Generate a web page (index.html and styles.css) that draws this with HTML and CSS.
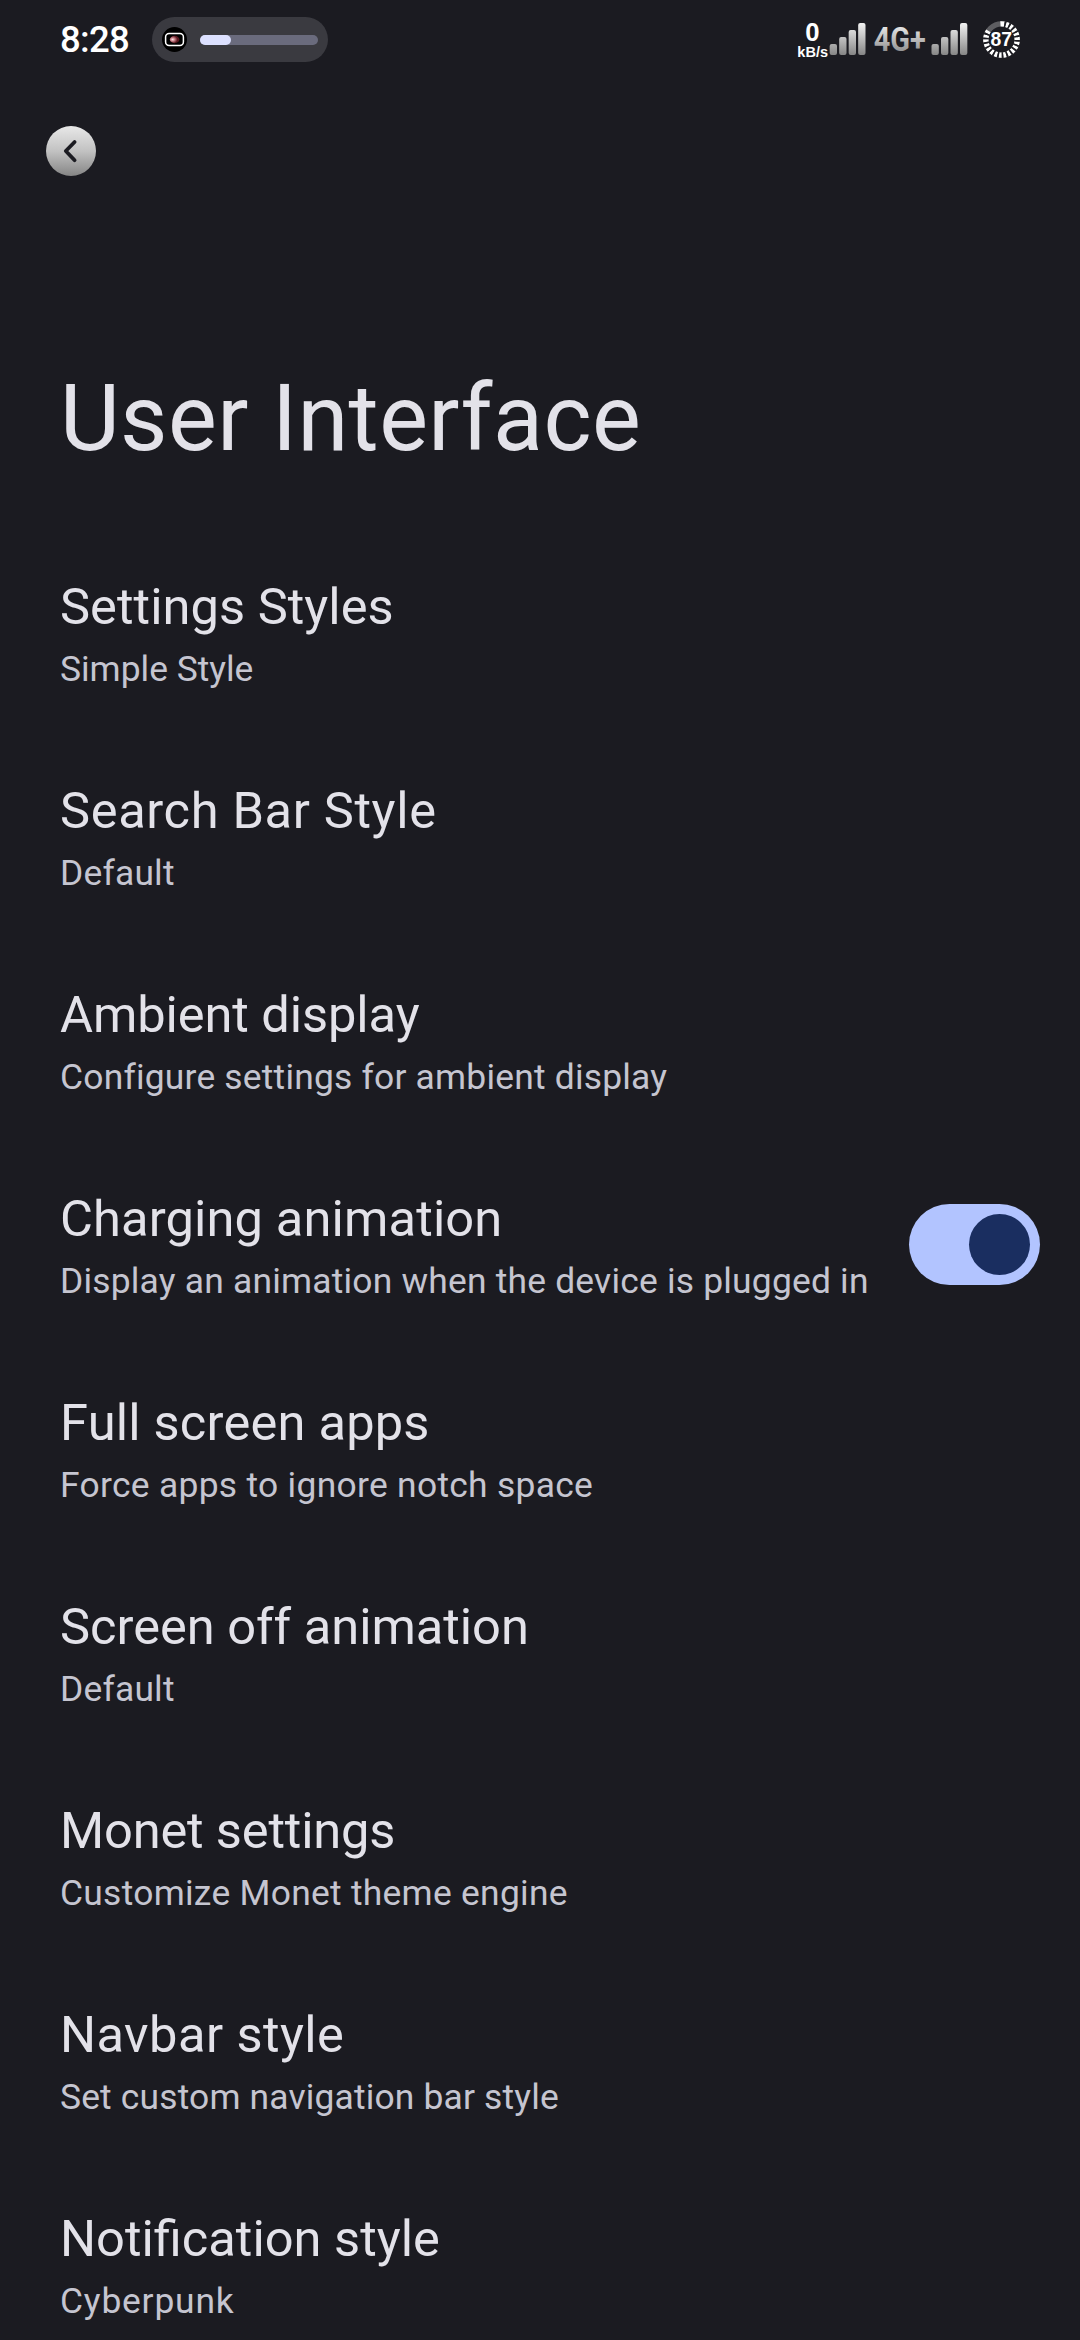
FILE: index.html
```html
<!DOCTYPE html>
<html lang="en">
<head>
<meta charset="utf-8">
<title>User Interface</title>
<link rel="stylesheet" href="styles.css">
</head>
<body>
<div class="screen">
  <header class="status">
    <span class="clock">8:28</span>
    <div class="chip">
      <svg class="chip-icon" viewBox="0 0 25 25">
        <defs><radialGradient id="lens" cx=".3"><stop offset="0" stop-color="#ffe9e9"/><stop offset=".45" stop-color="#c98088"/><stop offset="1" stop-color="#5a1820"/></radialGradient></defs>
        <circle cx="12.5" cy="12.5" r="12.5" fill="#000"/>
        <rect x="3.6" y="6.4" width="17.8" height="12.2" rx="3.5" fill="#000" stroke="#fff" stroke-width="1.5"/>
        <ellipse cx="12.6" cy="12.5" rx="4.8" ry="3.7" fill="url(#lens)"/>
      </svg>
      <div class="track"><div class="fill"></div></div>
    </div>
    <svg class="indicators" viewBox="0 0 780 240">
      <defs>
        <linearGradient id="silver" gradientUnits="userSpaceOnUse" x1="0" y1="69" x2="0" y2="166"><stop offset="0" stop-color="#f2f2f2"/><stop offset="1" stop-color="#858585"/></linearGradient>
        <g id="bars"><rect y="132" width="22" height="33" rx="6"/><rect x="28.5" y="111" width="22" height="54" rx="6"/><rect x="57" y="90" width="22" height="75" rx="6"/><rect x="85.500" y="69" width="22" height="96" rx="6"/></g>
      </defs>
      <text class="ind-text" x="97" y="123" font-size="77" text-anchor="middle">0</text>
      <text class="ind-text" x="52" y="171" font-size="44" textLength="92" lengthAdjust="spacingAndGlyphs">kB/s</text>
      <use href="#bars" x="149" fill="url(#silver)"/>
      <text class="ind-net" x="281" y="152" font-size="98" textLength="156" lengthAdjust="spacingAndGlyphs" fill="url(#silver)">4G+</text>
      <use href="#bars" x="454.500" fill="url(#silver)"/>
      <g fill="none" stroke-width="16">
        <circle cx="664.500" cy="118.500" r="47" stroke="#5e5e62"/>
        <circle cx="664.500" cy="118.500" r="47" stroke="#fff" pathLength="100" stroke-dasharray="2.9 1.6 2.9 1.6 2.9 1.6 2.9 1.6 2.9 1.6 2.9 1.6 2.9 1.6 2.9 1.6 2.9 1.6 2.9 1.6 2.9 1.6 2.9 1.6 2.9 1.6 2.9 1.6 2.9 1.6 2.9 1.6 2.9 1.6 2.9 1.6 2.9 14.500 0 0" transform="rotate(-90 664.500 118.500)"/>
        <circle cx="664.500" cy="118.500" r="47" stroke="#1b1b21" pathLength="100" stroke-dasharray="0 2.9 1.6 2.9 1.6 2.9 1.6 2.9 1.6 2.9 1.6 2.9 1.6 2.9 1.6 2.9 1.6 2.9 1.6 2.9 1.6 2.9 1.6 2.9 1.6 2.9 1.6 2.9 1.6 2.9 1.6 2.9 1.6 2.9 1.6 2.9 1.6 17.400" transform="rotate(-90 664.500 118.500)"/>
      </g>
      <text class="ind-bat" x="664" y="139" font-size="58" text-anchor="middle">87</text>
    </svg>
  </header>
  <nav class="toolbar">
    <svg class="back" viewBox="0 0 50 50" role="img" aria-label="Back">
      <defs><linearGradient id="disc" x2="0" y2="1"><stop offset="0" stop-color="#e8e8e8"/><stop offset=".5" stop-color="#c2c2c2"/><stop offset="1" stop-color="#858585"/></linearGradient></defs>
      <circle cx="25" cy="25" r="25" fill="url(#disc)"/>
      <path d="M28.600 16 19.800 25l8.800 9.200" fill="none" stroke="#1b1b21" stroke-width="3.800" stroke-linecap="round" stroke-linejoin="round"/>
    </svg>
  </nav>
  <h1 class="heading">User Interface</h1>
  <main class="list">
    <section class="row r1"><div><h2>Settings Styles</h2><p>Simple Style</p></div></section>
    <section class="row r2"><div><h2>Search Bar Style</h2><p>Default</p></div></section>
    <section class="row r3"><div><h2>Ambient display</h2><p>Configure settings for ambient display</p></div></section>
    <section class="row r4"><div><h2>Charging animation</h2><p>Display an animation when the device is plugged in</p></div><div class="switch"><div class="thumb"></div></div></section>
    <section class="row r5"><div><h2>Full screen apps</h2><p>Force apps to ignore notch space</p></div></section>
    <section class="row r6"><div><h2>Screen off animation</h2><p>Default</p></div></section>
    <section class="row r7"><div><h2>Monet settings</h2><p>Customize Monet theme engine</p></div></section>
    <section class="row r8"><div><h2>Navbar style</h2><p>Set custom navigation bar style</p></div></section>
    <section class="row r9"><div><h2>Notification style</h2><p>Cyberpunk</p></div></section>
  </main>
</div>
</body>
</html>
```
FILE: styles.css
```css
* { box-sizing: border-box; margin: 0; padding: 0; }
body { background: #1b1b21; font-family: Roboto, "Noto Sans", sans-serif; color: #e3e2e9; }
.screen { height: 2340px; overflow: hidden; display: flex; flex-direction: column; }
svg { display: block; flex: none; }

.status { height: 80px; flex: none; display: flex; padding: 0 40px 0 60px; }
.clock { width: 92px; padding-top: 17.500px; font-size: 36.500px; line-height: 43px; font-weight: 500; letter-spacing: -0.700px; color: #fff; }
.chip { width: 176px; height: 45px; margin-top: 17px; padding: 0 10px 0 10px; border-radius: 23px; background: #3a3a40; display: flex; align-items: center; gap: 13px; }
.chip-icon { width: 25px; height: 25px; }
.track { flex: 1; height: 10px; border-radius: 5px; background: #6a6b7d; }
.fill { width: 31px; height: 10px; border-radius: 5px; background: #dce0ff; }
.indicators { width: 260px; height: 80px; margin-left: auto; }
.ind-text, .ind-bat { font-family: "Liberation Sans", sans-serif; font-weight: 700; fill: #fff; }
.ind-net { font-family: Roboto, sans-serif; font-weight: 700; }

.toolbar { height: 284px; flex: none; padding: 46px 0 0 46px; }
.back { width: 50px; height: 50px; }

.heading { height: 164px; flex: none; padding-left: 60px; font-size: 92px; line-height: 109px; font-weight: 400; letter-spacing: 0.410px; }

.row { height: 204px; padding: 49px 40px 0 60px; display: flex; justify-content: space-between; align-items: flex-start; white-space: nowrap; }
.row h2 { font-size: 50.600px; line-height: 60px; font-weight: 400; }
.row p { margin-top: 11px; font-size: 35.400px; line-height: 42px; color: #c5c5d0; }
.switch { width: 131px; height: 81px; margin-top: 15px; padding-right: 10px; border-radius: 41px; background: #b2c4ff; display: flex; align-items: center; justify-content: flex-end; }
.thumb { width: 61px; height: 61px; border-radius: 50%; background: #1a2e60; }

.r1 h2 { letter-spacing: 0.040px; }
.r2 h2 { letter-spacing: 0.640px; }
.r3 h2 { letter-spacing: -0.080px; }
.r4 h2 { letter-spacing: 0.140px; }
.r5 h2 { letter-spacing: 0.210px; }
.r6 h2 { letter-spacing: -0.020px; }
.r7 h2 { letter-spacing: -0.180px; }
.r8 h2 { letter-spacing: 0.440px; }
.r9 h2 { letter-spacing: 0; }
.r2 p, .r3 p, .r4 p, .r6 p { letter-spacing: 0.210px; }
.r5 p { letter-spacing: 0.300px; }
.r7 p { letter-spacing: 0.280px; }
.r8 p { letter-spacing: 0.170px; }
.r9 p { letter-spacing: 0.800px; }
```
